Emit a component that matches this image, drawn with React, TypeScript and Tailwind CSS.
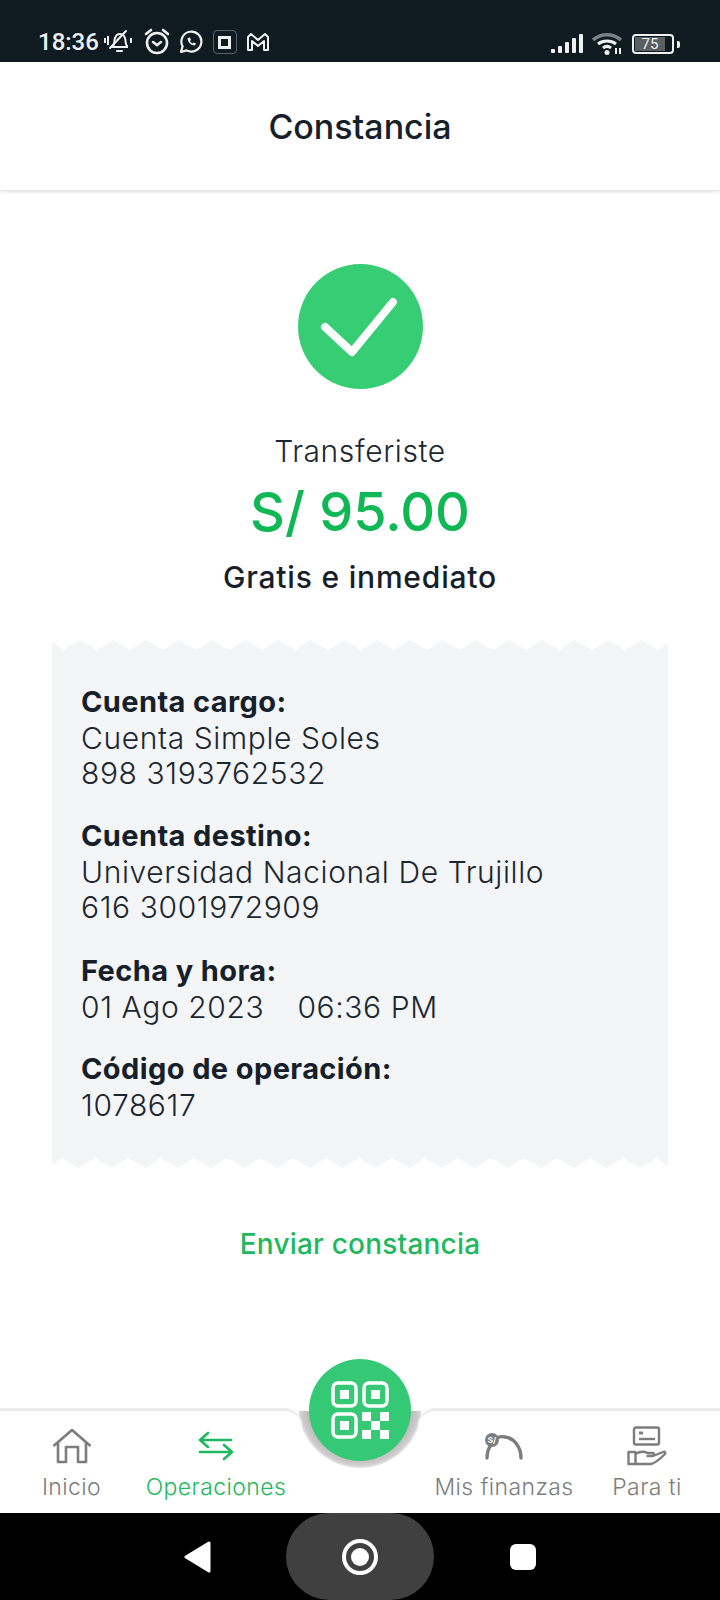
const font = "font-['Inter','Liberation_Sans',sans-serif]";

function StatusBar() {
  return (
    <div className="flex h-[62px] shrink-0 items-end justify-between bg-[#101a21] pb-[6px] pl-[38px] pr-[40px] text-[#eef0f1]">
      <div className="flex items-center">
        <span className="font-['Roboto',sans-serif] text-[24px] leading-[28px] font-medium">18:36</span>
        <svg width="30" height="26" viewBox="0 0 30 26" fill="none" stroke="currentColor" strokeWidth="2" className="ml-[5px]">
          <path d="M9 17c2-2 1-6 2-8 1-3 3-4 5-4s4 1 5 4c1 3 0 6 2 8v1H8z" />
          <path d="M13 22h5M6 19 22 2" strokeLinecap="round" />
          <path d="M1 9v5M4 7v9M27 9v5" />
        </svg>
        <svg width="28" height="28" viewBox="0 0 28 28" fill="none" stroke="currentColor" strokeWidth="2.600" className="ml-[9px]">
          <circle cx="14" cy="15" r="10" />
          <path d="M10 14l4 3 4-3M3 6l5-4M25 6l-5-4" strokeLinecap="round" />
        </svg>
        <svg width="24" height="24" viewBox="0 0 24 24" fill="none" stroke="currentColor" strokeWidth="2.200" className="ml-[8px]">
          <path d="M2 22l1.600-5.600A10 10 0 1 1 7.600 20.400z" strokeLinejoin="round" />
          <path d="M8.500 8c0 4 3.500 7.500 7.500 7.500l1-2-2.500-1-1 1c-1-.5-2-1.500-2.500-2.500l1-1-1-2.500z" fill="currentColor" stroke="none" />
        </svg>
        <div className="ml-[10px] flex h-[24px] w-[24px] items-center justify-center rounded-[4px] border border-[#59616a]">
          <div className="h-[13px] w-[13px] border-[3px] border-[#eef0f1]" />
        </div>
        <svg width="24" height="20" viewBox="0 0 24 20" fill="none" stroke="currentColor" strokeWidth="2" strokeLinejoin="round" className="ml-[9px]">
          <path d="M2 18V5l3-3 7 6 7-6 3 3v13h-4V9l-6 5-6-5v9z" />
        </svg>
      </div>
      <div className="flex items-center">
        <svg width="34" height="22" viewBox="0 0 34 22" fill="currentColor">
          <rect x="1" y="16" width="4" height="4" rx="1" />
          <rect x="8" y="13" width="4" height="7" rx="1" />
          <rect x="15" y="9" width="4" height="11" rx="1" />
          <rect x="22" y="5" width="4" height="15" rx="1" />
          <rect x="29" y="1" width="4" height="19" rx="1" />
        </svg>
        <svg width="32" height="24" viewBox="0 0 32 24" fill="none" className="ml-[7px]">
          <path d="M2 8c8-7 20-7 28 0" stroke="#7b8085" strokeWidth="3.500" />
          <path d="M7 12c5-4 13-4 18 0" stroke="#eef0f1" strokeWidth="3" />
          <path d="M12 16c2.500-2 5.500-2 8 0" stroke="#eef0f1" strokeWidth="3" />
          <circle cx="16" cy="20.500" r="2.500" fill="#eef0f1" />
          <path d="M25 16v6M29 16v6" stroke="#eef0f1" strokeWidth="2" />
        </svg>
        <div className="ml-[9px] flex h-[20px] w-[42px] items-center overflow-hidden rounded-[4px] border-2 border-[#eef0f1] p-[1px]">
          <div className="flex h-full w-[30px] items-center justify-center bg-[#5a5f63] font-['Roboto',sans-serif] text-[15px] leading-none">75</div>
        </div>
        <div className="ml-[3px] h-[7px] w-[3px] rounded-r-[2px] bg-[#eef0f1]" />
      </div>
    </div>
  );
}

function Zigzag({ flip }: { flip?: boolean }) {
  return (
    <svg viewBox="0 0 616 11" width="616" height="11" preserveAspectRatio="none" className={flip ? "block -mt-px rotate-180" : "block -mb-px"}>
      <path
        d="M0 0v1L11 10 28 0 45 10 61 0 78 10 94 0 111 10 127 0 144 10 160 0 177 10 193 0 210 10 226 0 243 10 259 0 276 10 292 0 309 10 325 0 342 10 358 0 375 10 391 0 408 10 424 0 441 10 457 0 474 10 490 0 507 10 523 0 540 10 556 0 573 10 589 0 606 10 616 3V0z"
        fill="#ffffff"
      />
    </svg>
  );
}

function Detail({ title, lines, className }: { title: string; lines: string[]; className?: string }) {
  return (
    <div className={className}>
      <div className="text-[29px] leading-[38px] font-bold tracking-[0.4px] text-[#15202a]">{title}</div>
      {lines.map((line) => (
        <div key={line} className="text-[30px] leading-[35px] font-light tracking-[0.6px] whitespace-pre text-[#1b2730]">
          {line}
        </div>
      ))}
    </div>
  );
}

function NavItem({ label, active, icon, className }: { label: string; active?: boolean; icon: React.ReactNode; className?: string }) {
  return (
    <div className={`flex flex-col items-center pt-[11px] ${active ? "text-[#1fb85f]" : "text-[#7d7d7d]"} ${className ?? ""}`}>
      <div className="flex h-[44px] items-end">{icon}</div>
      <span className="mt-[7px] text-[23px] leading-[28px] font-light tracking-[0.4px] whitespace-nowrap">{label}</span>
    </div>
  );
}

function BottomNav() {
  return (
    <div className="relative flex h-[102px] shrink-0 justify-between bg-white">
      {/* grey lip under the QR button */}
      <div className="absolute left-[298px] top-0 h-[57px] w-[124px] overflow-hidden">
        <div className="-mt-[67px] h-[124px] w-[124px] rounded-full bg-[radial-gradient(circle_closest-side,#bdbdbd_85%,#cdcdcd_95%,#e6e6e6_100%)]" />
      </div>
      <nav className="relative -mt-[3px] flex h-[105px] w-[302px] rounded-tr-[18px] border-t-[3px] border-[#ebebeb] bg-white">
        <NavItem
          label="Inicio"
          className="w-[143px]"
          icon={
            <svg width="40" height="36" viewBox="0 0 40 36" fill="none" stroke="currentColor" strokeWidth="2.600" strokeLinejoin="round" className="mb-[2px]">
              <path d="M1.500 18 20 2l18.500 16" />
              <path d="M6 14v20h8V19h12v15h8V14" />
            </svg>
          }
        />
        <NavItem
          label="Operaciones"
          active
          className="w-[146px]"
          icon={
            <svg width="36" height="30" viewBox="0 0 36 30" fill="none" stroke="currentColor" strokeWidth="2.600" strokeLinecap="round" strokeLinejoin="round" className="mb-[5px]">
              <path d="M2 9h31M10 2 2 9l8 7" />
              <path d="M2 21h31M26 14l8 7-8 7" />
            </svg>
          }
        />
      </nav>
      <nav className="relative -mt-[3px] flex h-[105px] w-[302px] rounded-tl-[18px] border-t-[3px] border-[#ebebeb] bg-white pl-[2px]">
        <NavItem
          label="Mis finanzas"
          className="w-[168px]"
          icon={
            <svg width="40" height="28" viewBox="0 0 40 28" fill="none" className="mb-[6px]">
              <path d="M3 26c0-6 1-10 5-14M9 8c4-3 8-4 12-3 9 1 16 10 16 21" stroke="currentColor" strokeWidth="3.400" strokeLinecap="round" />
              <circle cx="8" cy="8" r="7" fill="currentColor" />
              <text x="8" y="11" textAnchor="middle" fontSize="8" fontWeight="700" fill="#ffffff">S/</text>
            </svg>
          }
        />
        <NavItem
          label="Para ti"
          className="w-[118px]"
          icon={
            <svg width="40" height="40" viewBox="0 0 40 40" fill="none" stroke="currentColor" strokeWidth="2.400" strokeLinejoin="round">
              <rect x="7" y="1.500" width="25" height="17" rx="2" />
              <path d="M12 7h4" strokeWidth="3" />
              <path d="M12 13h16" />
              <path d="M1.500 26h7v12h-7zM8.500 28c5-3 8-3 12-1h5c2 0 2 3 0 3h-6M26 30l10-4c2-1 3 1 1.500 2.500C33 33 28 37 24 38H8.500" />
            </svg>
          }
        />
      </nav>
      <div className="absolute left-[309px] -top-[52px] flex h-[102px] w-[102px] items-center justify-center rounded-full bg-[#36c975]">
        <svg width="58" height="58" viewBox="0 0 58 58" fill="#ffffff">
          <g fill="none" stroke="#ffffff" strokeWidth="3.500">
            <rect x="2" y="2" width="23" height="23" rx="5" />
            <rect x="33" y="2" width="23" height="23" rx="5" />
            <rect x="2" y="33" width="23" height="23" rx="5" />
          </g>
          <rect x="9" y="9" width="9" height="9" />
          <rect x="40" y="9" width="9" height="9" />
          <rect x="9" y="40" width="9" height="9" />
          <rect x="31" y="31" width="9" height="9" />
          <rect x="49" y="31" width="9" height="9" />
          <rect x="40" y="40" width="9" height="9" />
          <rect x="31" y="49" width="9" height="9" />
          <rect x="49" y="49" width="9" height="9" />
        </svg>
      </div>
    </div>
  );
}

export default function App() {
  return (
    <div className={`flex h-[1600px] w-[720px] flex-col overflow-hidden bg-white ${font}`}>
      <StatusBar />
      <header className="z-10 flex h-[128px] shrink-0 items-center justify-center bg-white pt-[2px] shadow-[0_1px_4px_rgba(0,0,0,0.18)]">
        <h1 className="text-[34px] leading-none font-medium text-[#15202a]">Constancia</h1>
      </header>
      <main className="flex flex-1 flex-col items-center">
        <div className="mt-[74px] flex h-[125px] w-[125px] items-center justify-center rounded-full bg-[#36cd75]">
          <svg width="80" height="60" viewBox="0 0 80 60" fill="none" stroke="#ffffff" strokeWidth="8" strokeLinecap="round" strokeLinejoin="round">
            <path d="M5 30 32 55 73 5" />
          </svg>
        </div>
        <div className="mt-[44px] text-[30px] leading-[36px] font-light tracking-[0.6px] text-[#1b2730]">Transferiste</div>
        <div className="mt-[12px] text-[54px] leading-[62px] font-medium text-[#0fb755]">S/ 95.00</div>
        <div className="mt-[17px] text-[30px] leading-[34px] font-medium tracking-[0.8px] text-[#15202a]">Gratis e inmediato</div>
        <section className="mt-[46px] w-[616px] bg-[#f4f5f6]">
          <Zigzag />
          <div className="h-[508px] px-[29px] pt-[33px]">
            <Detail title="Cuenta cargo:" lines={["Cuenta Simple Soles", "898 3193762532"]} />
            <Detail title="Cuenta destino:" className="mt-[26px]" lines={["Universidad Nacional De Trujillo", "616 3001972909"]} />
            <Detail title="Fecha y hora:" className="mt-[27px]" lines={["01 Ago 2023   \u200906:36 PM"]} />
            <Detail title="Código de operación:" className="mt-[25px]" lines={["1078617"]} />
          </div>
          <Zigzag flip />
        </section>
        <button className="mt-[58px] text-[28px] leading-[36px] font-medium tracking-[0.2px] text-[#1fb85f]">Enviar constancia</button>
      </main>
      <BottomNav />
      <div className="grid h-[87px] shrink-0 grid-cols-[1fr_148px_1fr] items-center bg-black">
        <div className="flex justify-end pr-[74px]">
          <svg width="28" height="32" viewBox="0 0 28 32">
            <path d="M25 2v28L2 16z" fill="#ffffff" stroke="#ffffff" strokeWidth="3" strokeLinejoin="round" />
          </svg>
        </div>
        <div className="flex h-[87px] items-center justify-center rounded-full bg-[#404040]">
          <div className="flex h-[36px] w-[36px] items-center justify-center rounded-full border-[4px] border-white">
            <div className="h-[18px] w-[18px] rounded-full bg-white" />
          </div>
        </div>
        <div className="pl-[76px]">
          <div className="h-[26px] w-[26px] rounded-[6px] bg-white" />
        </div>
      </div>
    </div>
  );
}
